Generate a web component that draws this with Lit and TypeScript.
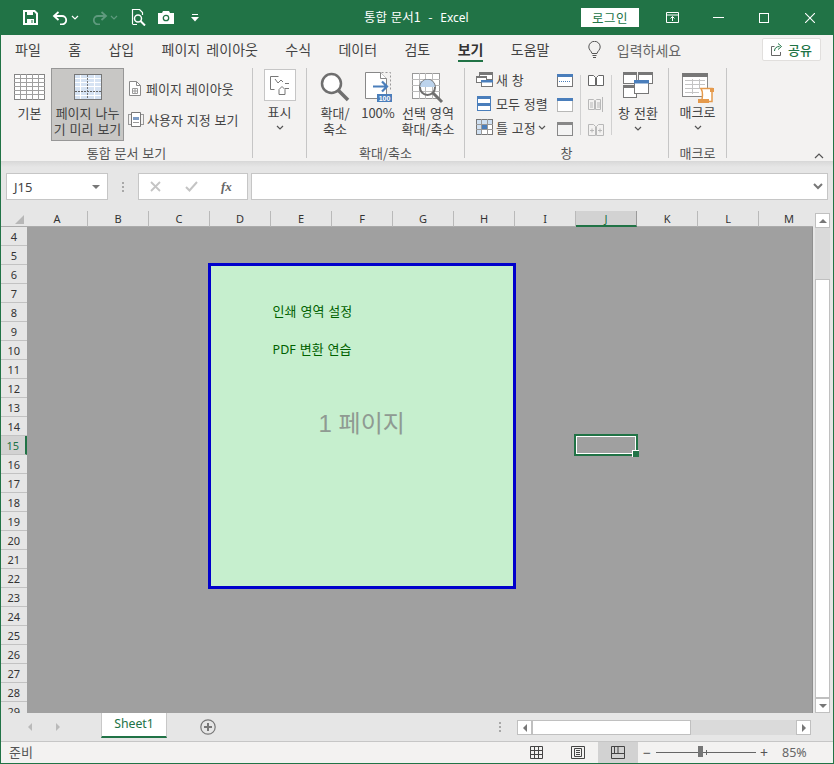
import { LitElement, html, css } from "lit";
import { customElement } from "lit/decorators.js";

const caret = (c = "#555") => html`<svg class="caret" width="8" height="5" viewBox="0 0 8 5"><path d="M1 1l3 3 3-3" fill="none" stroke=${c} stroke-width="1.2"/></svg>`;

const gridIcon = html`<svg width="31" height="26" viewBox="0 0 31 26"><rect x=".5" y=".5" width="30" height="25" fill="#fff" stroke="#858585"/><path d="M0 4.500h31M0 8.500h31M0 12.500h31M0 16.500h31M0 20.500h31M6.500 0v26M12.500 0v26M18.500 0v26M24.500 0v26" stroke="#a0a0a0"/></svg>`;
const breakIcon = html`<svg width="28" height="26" viewBox="0 0 28 26"><rect x=".5" y=".5" width="27" height="25" fill="#fff" stroke="#858585"/><path d="M1 1h26v24H1z" fill="#d6e3f3"/><path d="M0 4.500h28M0 8.500h28M0 12.500h28M0 21.500h28M6.500 0v26M20.500 0v26" stroke="#fff"/><path d="M13.500 1v24" stroke="#777" stroke-dasharray="2 1"/><path d="M1 17.500h26" stroke="#666" stroke-dasharray="2 1"/><rect x=".5" y=".5" width="27" height="25" fill="none" stroke="#777"/></svg>`;
const layoutIcon = html`<svg width="12" height="15" viewBox="0 0 12 15"><path d="M.5.500h7l4 4v10H.5z" fill="#fff" stroke="#8a8a8a"/><path d="M7.500.5v4h4" fill="none" stroke="#8a8a8a"/><path d="M3.500 7.500h5v5h-5zM6 7.500v5M3.500 10h5" fill="none" stroke="#9a9a9a"/></svg>`;
const customIcon = html`<svg width="16" height="17" viewBox="0 0 16 17"><path d="M3.500 1.500h9v14h-9z" fill="#fff" stroke="#777"/><path d="M0 3.500h3M0 13.500h3M13 3.500h3M13 13.500h3M.5 3v11M15.500 3v11" stroke="#999" fill="none"/><path d="M5 6h6v3H5z" fill="#7d9cc4"/><path d="M5 11.500h6" stroke="#999"/></svg>`;
const showIcon = html`<svg width="19" height="19" viewBox="0 0 19 19" fill="none" stroke="#777"><path d="M.5 13.500v-13h8M.5 13.500h4"/><path d="M5 3l3 4 3-3 2 2M15 7.500h4M15 12.500h4"/><path d="M9 18.500v-5l3-3 3 3v5z"/></svg>`;
const magIcon = html`<svg width="30" height="30" viewBox="0 0 30 30" fill="none"><circle cx="11.500" cy="11.500" r="9.500" fill="#fff" stroke="#6f6f6f" stroke-width="2.500"/><path d="M18.500 18.500l9.500 9.500" stroke="#6f6f6f" stroke-width="3.500"/></svg>`;
const hundredIcon = html`<svg width="27" height="30" viewBox="0 0 27 30"><path d="M.5.500h15l6 6v20H.5z" fill="#fff" stroke="#888"/><path d="M15.500.500v6h6" fill="#fff" stroke="#888"/><path d="M16.500.500h9v19" fill="none" stroke="#999" stroke-dasharray="2 2"/><path d="M8 14.500h14M17 9.500l5 5-5 5" fill="none" stroke="#4a7ebb" stroke-width="2.200"/><rect x="12" y="22" width="15" height="9" fill="#4a7ebb"/><text class="badge" x="19.500" y="29">100</text></svg>`;
const selZoomIcon = html`<svg width="32" height="31" viewBox="0 0 32 31"><rect x=".5" y=".5" width="27" height="25" fill="#fff" stroke="#999"/><path d="M0 6.500h28M0 12.500h28M0 18.500h28M7.500 0v26M13.500 0v26M20.500 0v26" stroke="#bbb"/><path d="M8 8h13v6H8z" fill="#bcd3ec"/><circle cx="15.500" cy="14.500" r="7.500" fill="none" stroke="#6f6f6f" stroke-width="2"/><path d="M8 14a7.500 7.500 0 0 1 15 0z" fill="#bcd3ec"/><path d="M21 20l9 9" stroke="#6f6f6f" stroke-width="3"/></svg>`;
const newWinIcon = html`<svg width="17" height="15" viewBox="0 0 17 15"><rect x="3.500" y=".5" width="13" height="7" fill="#fff" stroke="#777"/><path d="M3 0h14v3H3z" fill="#777"/><rect x=".5" y="4.500" width="10" height="6" fill="#fff" stroke="#777"/><path d="M0 4h11v2H0z" fill="#777"/><rect x="5.500" y="8.500" width="11" height="6" fill="#fff" stroke="#777"/><path d="M5 8h12v2.500H5z" fill="#4a7ebb"/></svg>`;
const arrangeIcon = html`<svg width="17" height="15" viewBox="-1 0 17 15"><rect x=".5" y=".5" width="13" height="14" fill="#fff" stroke="#4a7ebb"/><path d="M0 0h14v3H0zM0 7h14v3H0z" fill="#4a7ebb"/></svg>`;
const freezeIcon = html`<svg width="17" height="16" viewBox="0 0 17 16"><rect x=".5" y=".5" width="16" height="15" fill="#fff" stroke="#777"/><path d="M1 1h15v5H1zM1 1h5v14H1z" fill="#cfe0f2"/><path d="M0 5.500h17M0 10.500h17M5.500 0v16M11.500 0v16" stroke="#999"/><path d="M6 6h5v4H6z" fill="#4a7ebb"/></svg>`;
const winA = html`<svg width="16" height="13" viewBox="0 0 16 13"><rect x=".5" y=".5" width="15" height="12" fill="#fff" stroke="#777"/><path d="M0 0h16v3H0z" fill="#4a7ebb"/><path d="M2 7.500h12" stroke="#4a7ebb" stroke-dasharray="1 1"/></svg>`;
const winB = html`<svg width="16" height="14" viewBox="0 0 16 14"><rect x=".5" y=".5" width="15" height="13" fill="#fff" stroke="#777" stroke-dasharray="1 1"/><path d="M0 0h16v3H0z" fill="#4a7ebb"/></svg>`;
const winC = html`<svg width="16" height="14" viewBox="0 0 16 14"><rect x=".5" y=".5" width="15" height="13" fill="#f4f4f4" stroke="#888"/><path d="M0 0h16v3H0z" fill="#888"/></svg>`;
const bookA = html`<svg width="16" height="12" viewBox="0 0 16 12"><path d="M.5 1.500h5l2 2v8h-7zM8.500 3.500l2-2h5v10h-7z" fill="#fff" stroke="#666"/></svg>`;
const bookB = html`<svg width="16" height="15" viewBox="0 0 16 15" fill="none" stroke="#b8b8b8"><path d="M.5 2.500h5l1 1v9h-6zM7.500 3.500l1-1h4v10h-5z"/><path d="M2 6h3M2 8h3M2 10h3M9 6h3M9 8h3M9 10h3M14.500 0v15"/></svg>`;
const bookC = html`<svg width="16" height="13" viewBox="0 0 16 13" fill="none" stroke="#b8b8b8"><path d="M.5 1.500h5l2 2v9h-7zM8.500 3.500l2-2h5v11h-7z"/><path d="M2 7.500h4M4 5.500v4M10 7.500h4M12 5.500v4"/></svg>`;
const switchIcon = html`<svg width="30" height="26" viewBox="0 0 30 26"><rect x=".5" y=".5" width="13" height="11" fill="#fff" stroke="#777"/><path d="M0 0h14v3H0z" fill="#777"/><rect x="15.500" y=".5" width="14" height="11" fill="#fff" stroke="#777"/><path d="M15 0h15v3H15z" fill="#777"/><rect x=".5" y="13.500" width="13" height="12" fill="#fff" stroke="#777"/><path d="M0 13h14v3H0z" fill="#777"/><rect x="11.500" y="8.500" width="14" height="13" fill="#fff" stroke="#777"/><path d="M11 8h15v3.500H11z" fill="#4a7ebb"/></svg>`;
const macroIcon = html`<svg width="32" height="30" viewBox="0 0 32 30"><rect x=".5" y=".5" width="25" height="23" fill="#fff" stroke="#888"/><path d="M0 0h26v4H0z" fill="#777"/><path d="M3 7.500h20M3 11.500h20M3 15.500h20M3 19.500h14M10.500 6v15M17.500 6v10" stroke="#c4c4c4"/><path d="M19 15.500h11v13H19c2-3 2-10 0-13z" fill="#fff" stroke="#e59a4c" stroke-width="1.500"/><path d="M16 26h11v4H16z" fill="#e59a4c"/><path d="M28 15h4v4h-4z" fill="#e59a4c"/></svg>`;

const COLS = ["A","B","C","D","E","F","G","H","I","J","K","L","M"];
const ROWS = Array.from({ length: 26 }, (_, i) => i + 4);

@customElement("app-root")
export class AppRoot extends LitElement {
  static styles = css`
    :host { display: block; width: 834px; height: 764px; overflow: hidden; position: relative;
      font-family: "Noto Sans CJK KR", "Noto Sans", sans-serif; color: #444; background: #e6e6e6; }
    * { box-sizing: border-box; }
    svg { display: block; flex: none; }
    .win { display: flex; flex-direction: column; width: 834px; height: 764px; border: 1px solid #217346; border-top: 0; overflow: hidden; }
    .sp1 { height: 1px; } .sp3 { height: 3px; } .sp4 { height: 4px; } .sp5 { height: 5px; } .sp7 { height: 7px; }

    /* title bar */
    .title { flex: none; height: 35px; margin: 0 -1px; background: #217346; display: flex; align-items: center; color: #fff; }
    .qat { width: 360px; display: flex; align-items: center; padding-left: 23px; }
    .q-save { margin-right: 14px; }
    .q-undo-c { margin: 0 12px 0 2px; }
    .q-redo-c { margin: 0 13px 0 2px; }
    .q-cam { margin-left: 11px; }
    .q-more { margin-left: 17px; }
    .docname { width: 220px; font-size: 12.5px; line-height: 33px; height: 35px; white-space: pre; padding-left: 4px; word-spacing: 1px; }
    .docname .en { font-family: "Noto Sans", sans-serif; font-size: 12px; }
    .login { width: 58px; height: 19px; margin-left: 1px; background: #fff; color: #217346; font-size: 12.5px; line-height: 19px; text-align: center; letter-spacing: .5px; }
    .winbtns { display: flex; align-items: center; margin-left: 10px; }
    .winbtn { width: 46px; height: 35px; display: flex; align-items: center; justify-content: center; }

    /* tabs */
    .tabs { flex: none; height: 27px; background: #f3f2f1; display: flex; align-items: flex-start; padding: 3px 0 0 14px; gap: 27.400px; font-size: 14px; position: relative; }
    .tab { height: 24px; line-height: 22px; white-space: nowrap; color: #444; word-spacing: 3px; }
    .tab.on { font-weight: 700; color: #333; border-bottom: 2px solid #217346; }
    .tell { display: flex; align-items: center; gap: 16px; margin-left: 11px; height: 24px; color: #666; }
    .share { position: absolute; right: 12px; top: 3px; width: 59px; height: 23px; background: #fff; border: 1px solid #e1dfdd; border-radius: 2px; display: flex; align-items: center; justify-content: center; gap: 5px; color: #217346; font-size: 13px; font-weight: 500; }

    /* ribbon */
    .ribbon { flex: none; height: 100px; background: #f3f2f1; display: flex; padding-top: 6px; position: relative; font-size: 13px; border-bottom: 1px solid #d8d8d8; }
    .group { flex: none; display: flex; flex-direction: column; height: 93px; background: linear-gradient(#c6c6c6, #c6c6c6) right top / 1px 90px no-repeat; }
    .g1 { width: 252px; } .g2 { width: 54px; } .g3 { width: 158px; } .g4 { width: 204px; } .g5 { width: 58px; }
    .gbody { flex: 1; display: flex; min-height: 0; }
    .glabel { flex: none; height: 17px; line-height: 17px; text-align: center; color: #555; font-size: 13px; word-spacing: 1px; padding-right: 1px; }
    .big { display: flex; flex-direction: column; align-items: center; line-height: 16px; text-align: center; color: #444; word-spacing: 1px; white-space: nowrap; }
    .big .caret { margin-top: 5px; }
    .b-normal { width: 50px; padding: 6px 0 0 7px; }
    .b-break { width: 73px; height: 73px; padding-top: 5px; background: #c8c7c5; border: 1px solid #979797; }
    .smalls { display: flex; flex-direction: column; padding: 11px 0 0 5px; gap: 13px; }
    .small { display: flex; align-items: center; gap: 5px; height: 18px; white-space: nowrap; word-spacing: 1px; }
    .small.c { margin-left: -1px; gap: 3px; }
    .showbox { width: 32px; height: 32px; margin: 1px 0 3px; background: #fff; border: 1px solid #c6c6c6; display: flex; align-items: center; justify-content: center; }
    .b-show { width: 53px; padding: 0; }
    .b-zoom { width: 40px; padding-top: 4px; margin-left: 8px; }
    .b-hund { width: 46px; padding-top: 4px; }
    .b-sel { width: 54px; padding-top: 5px; }
    .wrows { display: flex; flex-direction: column; padding: 3px 0 0 11px; width: 92px; gap: 8px; }
    .wrow { display: flex; align-items: center; gap: 3px; height: 16px; white-space: nowrap; word-spacing: 1px; }
    .wrow .caret { margin-left: -1px; }
    .icol { display: flex; flex-direction: column; align-items: center; justify-content: space-between; width: 16px; height: 62px; margin-top: 6px; }
    .vsep { width: 1px; height: 60px; margin: 7px 7px 0; background: #d0d0d0; }
    .vsep.last { margin-right: 0; }
    .b-switch { width: 52px; padding-top: 4px; }
    .b-macro { width: 57px; padding-top: 5px; }
    .collapse { position: absolute; right: 9px; bottom: 2px; }

    /* formula bar */
    .fbar { flex: none; height: 49px; background: linear-gradient(#dadada, #e6e6e6 5px); display: flex; align-items: flex-start; padding: 11px 0 0 5px; }
    .box { background: #fff; border: 1px solid #c6c6c6; height: 27px; display: flex; align-items: center; }
    .namebox { width: 102px; padding: 0 7px; justify-content: space-between; font-size: 13px; color: #444; font-family: "Noto Sans", sans-serif; }
    .tri { width: 0; height: 0; border-left: 4px solid transparent; border-right: 4px solid transparent; border-top: 4px solid #777; }
    .fdots { width: 30px; display: flex; flex-direction: column; align-items: center; gap: 2px; padding-top: 9px; }
    .fdots i, .hdots i { display: block; width: 2px; height: 2px; background: #a8a8a8; }
    .fnbox { width: 110px; padding: 0 12px 0 11px; justify-content: space-between; }
    .fx { font-family: "Liberation Serif", serif; font-style: italic; font-weight: 700; font-size: 13px; color: #666; width: 14px; }
    .input { width: 577px; margin-left: 3px; justify-content: flex-end; padding-right: 4px; }

    /* sheet */
    .gridwrap { flex: none; height: 502px; display: flex; }
    .gridleft { flex: none; width: 811.600px; display: flex; flex-direction: column; }
    .colhead { flex: none; height: 16px; display: flex; background: #e6e6e6; }
    .corner { width: 25.600px; flex: none; position: relative; border-bottom: 1px solid #ababab; }
    .corner::after { content: ""; position: absolute; right: 3px; bottom: 2px; width: 0; height: 0; border-left: 9px solid transparent; border-bottom: 9px solid #b7b7b7; }
    .cols { flex: none; width: 786px; display: flex; overflow: hidden; }
    .col { flex: none; width: 61px; height: 16px; padding-left: 1px; text-align: center; font: 11px/15px "Noto Sans", sans-serif; color: #333; border-right: 1px solid #b9b9b9; border-bottom: 1px solid #ababab; }
    .col.sel { background: #d2d2d2; color: #217346; border-bottom: 2px solid #217346; border-right-color: #9a9a9a; }

    .main { flex: none; height: 486px; display: flex; }
    .rowhead { flex: none; width: 25.600px; overflow: hidden; background: #e6e6e6; }
    .row { height: 19.030px; text-align: center; font: 11px/19.500px "Noto Sans", sans-serif; color: #333; border-bottom: 1px solid #c2c2c2; }
    .row.sel { background: #d2d2d2; color: #217346; border-right: 2px solid #217346; }
    .sheet { flex: none; width: 786px; background: #a0a0a0; position: relative; overflow: hidden; border-right: 1px solid #8f8f8f; }
    .page { position: absolute; left: 181px; top: 36px; width: 308px; height: 326px; background: #c6efce; border: 3px solid #0000cc; }
    .pg-lines { padding: 35px 0 0 62px; display: flex; flex-direction: column; gap: 19px; color: #006100; font-size: 13px; word-spacing: 1px; }
    .pg-lines div { height: 19px; line-height: 19px; white-space: nowrap; }
    .pg-lines .en { font-family: "Noto Sans", sans-serif; font-size: 12.500px; }
    .pg-no { position: absolute; left: 108px; top: 141px; font: 24px/34px "Liberation Sans", "Noto Sans CJK KR", sans-serif; color: #8f9a92; white-space: nowrap; }
    .cell { position: absolute; left: 547.400px; top: 207px; width: 64px; height: 22px; border: 2px solid #217346; box-shadow: inset 0 0 0 1px #fff; }
    .cell::after { content: ""; position: absolute; right: -3px; bottom: -3px; width: 6px; height: 6px; background: #217346; border-left: 1px solid #fff; border-top: 1px solid #fff; }
    .vscroll { flex: none; width: 20px; display: flex; flex-direction: column; align-items: center; padding-top: 2px; background: #e6e6e6; }
    .track { width: 15px; height: 500px; background: #dadada; display: flex; flex-direction: column; }
    .sbtn { flex: none; width: 15px; height: 15px; background: #fff; border: 1px solid #c0c0c0; display: flex; align-items: center; justify-content: center; }
    .thumb { background: #fff; border: 1px solid #c0c0c0; }
    .t-up { border-left: 4px solid transparent; border-right: 4px solid transparent; border-bottom: 4px solid #777; }
    .t-dn { border-left: 4px solid transparent; border-right: 4px solid transparent; border-top: 4px solid #777; }
    .t-l { border-top: 4px solid transparent; border-bottom: 4px solid transparent; border-right: 4px solid #777; }
    .t-r { border-top: 4px solid transparent; border-bottom: 4px solid transparent; border-left: 4px solid #777; }
    .v-gap { flex: 1; }
    .v-thumb { flex: none; height: 419px; }

    /* sheet tabs */
    .tabbar { flex: none; height: 29px; background: #e6e6e6; display: flex; align-items: flex-start; border-bottom: 1px solid #c6c6c6; }
    .nav { flex: none; width: 100px; height: 28px; display: flex; align-items: center; gap: 24px; padding-left: 27px; }
    .nav i { opacity: .4; }
    .stab { flex: none; width: 66px; height: 25px; background: #fff; border: 1px solid #c8c8c8; border-top: 0; border-bottom: 2px solid #217346; color: #217346; font: 12.300px/22px "Noto Sans", sans-serif; text-align: center; }
    .add { flex: none; margin: 6px 0 0 33px; }
    .hdots { flex: none; width: 2px; margin: 9px 16px 0 283px; display: flex; flex-direction: column; gap: 2px; }
    .hscroll { flex: none; width: 294px; height: 15px; margin-top: 7px; display: flex; background: #dadada; }
    .h-thumb { flex: none; width: 159px; height: 15px; }

    /* status */
    .status { flex: 1; background: #f3f2f1; display: flex; align-items: stretch; font-size: 13px; color: #555; }
    .ready { width: 515px; padding-left: 8px; line-height: 19px; }
    .vw { flex: none; width: 41px; display: flex; align-items: center; justify-content: center; }
    .vw.on { background: #d2d2d2; width: 40px; }
    .zoom { display: flex; align-items: center; padding-left: 4px; }
    .slider { width: 100px; height: 1px; background: #666; margin: 0 3px 0 4px; position: relative; }
    .knob { position: absolute; left: 42px; top: -6px; width: 5px; height: 11px; background: #767676; }
    .tick { position: absolute; left: 50px; top: -2px; width: 1px; height: 5px; background: #666; }
    .pm { font: 14px/16px "Noto Sans", sans-serif; color: #555; width: 10px; text-align: center; }
    .pct { margin-left: 13px; font: 12.500px/20px "Noto Sans", sans-serif; color: #666; }
    .badge { font: 700 7px "Liberation Sans", sans-serif; fill: #fff; text-anchor: middle; }
  `;

  render() {
    return html`<div class="win">
      <div class="title">
        <div class="qat">
          <svg class="q-save" width="15" height="15" viewBox="0 0 15 15"><path d="M1 1h10.500L14 3.500V14H1z" fill="none" stroke="#fff" stroke-width="2"/><path d="M4 1.500h6v3.500H4z" fill="#fff"/><path d="M4 9h7v5H4z" fill="#fff"/><path d="M8.500 10h1v3h-1z" fill="#217346"/></svg>
          <svg width="17" height="14" viewBox="0 0 17 14" fill="none" stroke="#fff" stroke-width="1.800"><path d="M6.500 1L2 5l4.500 4"/><path d="M2.500 5H10a4.200 4.200 0 0 1 0 8.400H8"/></svg>
          <svg class="q-undo-c" width="8" height="5" viewBox="0 0 8 5"><path d="M1 1l3 3 3-3" fill="none" stroke="#fff" stroke-width="1.200"/></svg>
          <svg width="17" height="14" viewBox="0 0 17 14" fill="none" stroke="#5f9a7e" stroke-width="1.800"><path d="M10.500 1L15 5l-4.500 4"/><path d="M14.500 5H7a4.200 4.200 0 0 0 0 8.400h2"/></svg>
          <svg class="q-redo-c" width="8" height="5" viewBox="0 0 8 5"><path d="M1 1l3 3 3-3" fill="none" stroke="#5f9a7e" stroke-width="1.200"/></svg>
          <svg width="16" height="17" viewBox="0 0 16 17" fill="none" stroke="#fff"><path d="M1.500 15V.5h7l3 3V6" stroke-width="1.200"/><circle cx="7" cy="9.500" r="3.500" stroke-width="1.500"/><path d="M9.500 12l4.500 4.500" stroke-width="2"/><path d="M1.500 15.500H6" stroke-width="1"/></svg>
          <svg class="q-cam" width="16" height="13" viewBox="0 0 16 13"><path d="M0 2h4l1-2h6l1 2h4v11H0z" fill="#fff"/><circle cx="8" cy="7" r="2.700" fill="none" stroke="#217346" stroke-width="1.300"/></svg>
          <svg class="q-more" width="8" height="8" viewBox="0 0 8 8"><path d="M1 .5h6" stroke="#fff"/><path d="M0 3h8L4 7.500z" fill="#fff"/></svg>
        </div>
        <div class="docname">통합 문서1  -  <span class="en">Excel</span></div>
        <div class="login">로그인</div>
        <div class="winbtns">
          <div class="winbtn"><svg width="13" height="11" viewBox="0 0 13 11" fill="none" stroke="#fff"><path d="M.5.500h12v10H.5zM.5 3h12"/><path d="M6.500 9V4.500M4.500 6.500l2-2 2 2"/></svg></div>
          <div class="winbtn"><svg width="11" height="1" viewBox="0 0 11 1"><path d="M0 .5h11" stroke="#fff"/></svg></div>
          <div class="winbtn"><svg width="10" height="10" viewBox="0 0 10 10"><rect x=".5" y=".5" width="9" height="9" fill="none" stroke="#fff"/></svg></div>
          <div class="winbtn"><svg width="10" height="10" viewBox="0 0 10 10"><path d="M0 0l10 10M10 0L0 10" stroke="#fff" stroke-width="1.100"/></svg></div>
        </div>
      </div>

      <div class="tabs">
        ${["파일","홈","삽입","페이지 레이아웃","수식","데이터","검토"].map((t) => html`<div class="tab">${t}</div>`)}
        <div class="tab on">보기</div>
        <div class="tab">도움말</div>
        <div class="tell">
          <svg width="13" height="18" viewBox="0 0 13 18" fill="none" stroke="#555"><path d="M4 12.500C3.500 10 .8 9 .8 6a5.700 5.700 0 0 1 11.400 0c0 3-2.700 4-3.200 6.500z"/><path d="M4.500 14.500h4M5 16.500h3"/></svg>
          <span>입력하세요</span>
        </div>
        <div class="share">
          <svg width="12" height="13" viewBox="0 0 12 13" fill="none" stroke="#666"><path d="M3.500 3.500H.5v9h9V9"/><path d="M3.500 8c0-3 2-4.500 5-4.500M7 .5l3.500 3L7 6.500" stroke="#217346"/></svg>
          <span>공유</span>
        </div>
      </div>

      <div class="ribbon">
        <div class="group g1">
          <div class="gbody">
            <div class="big b-normal"><span>${gridIcon}</span><div class="sp5"></div><span>기본</span></div>
            <div class="big b-break"><span>${breakIcon}</span><div class="sp5"></div><span>페이지 나누</span><span>기 미리 보기</span></div>
            <div class="smalls">
              <div class="small">${layoutIcon}<span>페이지 레이아웃</span></div>
              <div class="small c">${customIcon}<span>사용자 지정 보기</span></div>
            </div>
          </div>
          <div class="glabel">통합 문서 보기</div>
        </div>
        <div class="group g2">
          <div class="gbody">
            <div class="big b-show"><div class="showbox">${showIcon}</div><span>표시</span>${caret()}</div>
          </div>
        </div>
        <div class="group g3">
          <div class="gbody">
            <div class="big b-zoom"><span>${magIcon}</span><div class="sp3"></div><span>확대/</span><span>축소</span></div>
            <div class="big b-hund"><span>${hundredIcon}</span><div class="sp3"></div><span>100%</span></div>
            <div class="big b-sel"><span>${selZoomIcon}</span><div class="sp1"></div><span>선택 영역</span><span>확대/축소</span></div>
          </div>
          <div class="glabel">확대/축소</div>
        </div>
        <div class="group g4">
          <div class="gbody">
            <div class="wrows">
              <div class="wrow">${newWinIcon}<span>새 창</span></div>
              <div class="wrow">${arrangeIcon}<span>모두 정렬</span></div>
              <div class="wrow">${freezeIcon}<span>틀 고정</span>${caret()}</div>
            </div>
            <div class="icol">${winA}${winB}${winC}</div>
            <div class="vsep"></div>
            <div class="icol">${bookA}${bookB}${bookC}</div>
            <div class="vsep last"></div>
            <div class="big b-switch"><span>${switchIcon}</span><div class="sp7"></div><span>창 전환</span>${caret()}</div>
          </div>
          <div class="glabel">창</div>
        </div>
        <div class="group g5">
          <div class="gbody">
            <div class="big b-macro"><span>${macroIcon}</span><div class="sp1"></div><span>매크로</span>${caret()}</div>
          </div>
          <div class="glabel">매크로</div>
        </div>
        <svg class="collapse" width="10" height="6" viewBox="0 0 10 6"><path d="M1 5l4-4 4 4" fill="none" stroke="#555" stroke-width="1.200"/></svg>
      </div>

      <div class="fbar">
        <div class="box namebox"><span>J15</span><span class="tri"></span></div>
        <div class="fdots"><i></i><i></i><i></i></div>
        <div class="box fnbox">
          <svg width="11" height="11" viewBox="0 0 11 11"><path d="M1 1l9 9M10 1l-9 9" stroke="#c4c4c4" stroke-width="1.800"/></svg>
          <svg width="13" height="11" viewBox="0 0 13 11"><path d="M1 6l3.500 3.500L12 1" fill="none" stroke="#c4c4c4" stroke-width="2"/></svg>
          <span class="fx">fx</span>
        </div>
        <div class="box input"><svg width="10" height="7" viewBox="0 0 10 7"><path d="M1 1l4 4 4-4" fill="none" stroke="#777" stroke-width="2"/></svg></div>
      </div>

      <div class="gridwrap">
        <div class="gridleft">
          <div class="colhead">
            <div class="corner"></div>
            <div class="cols">${COLS.map((c) => html`<div class="col ${c === "J" ? "sel" : ""}">${c}</div>`)}</div>
          </div>
          <div class="main">
            <div class="rowhead">${ROWS.map((r) => html`<div class="row ${r === 15 ? "sel" : ""}">${r}</div>`)}</div>
            <div class="sheet">
              <div class="page">
                <div class="pg-lines"><div>인쇄 영역 설정</div><div><span class="en">PDF</span> 변환 연습</div></div>
                <div class="pg-no">1 페이지</div>
              </div>
              <div class="cell"></div>
            </div>
          </div>
        </div>
        <div class="vscroll">
          <div class="track">
            <div class="sbtn"><i class="t-up"></i></div>
            <div class="v-gap"></div>
            <div class="thumb v-thumb"></div>
            <div class="sbtn"><i class="t-dn"></i></div>
          </div>
        </div>
      </div>

      <div class="tabbar">
        <div class="nav"><i class="t-l"></i><i class="t-r"></i></div>
        <div class="stab">Sheet1</div>
        <svg class="add" width="16" height="16" viewBox="0 0 16 16" fill="none"><circle cx="8" cy="8" r="7.200" stroke="#777" stroke-width="1.200"/><path d="M4 8h8M8 4v8" stroke="#777" stroke-width="2"/></svg>
        <div class="hdots"><i></i><i></i><i></i></div>
        <div class="hscroll">
          <div class="sbtn"><i class="t-l"></i></div>
          <div class="thumb h-thumb"></div>
          <div class="v-gap"></div>
          <div class="sbtn"><i class="t-r"></i></div>
        </div>
      </div>

      <div class="status">
        <div class="ready">준비</div>
        <div class="vw"><svg width="13" height="13" viewBox="0 0 13 13" fill="none" stroke="#444"><path d="M.5.500h12v12H.5zM.5 4.500h12M.5 8.500h12M4.500.5v12M8.500.5v12"/></svg></div>
        <div class="vw"><svg width="14" height="13" viewBox="0 0 14 13" fill="none" stroke="#444"><path d="M.5.500h13v12H.5z"/><path d="M3.500 2.500h7v8h-7zM5 4.500h4M5 6.500h4M5 8.500h4"/></svg></div>
        <div class="vw on"><svg width="14" height="13" viewBox="0 0 14 13" fill="none" stroke="#444"><path d="M.5.500h13v12H.5zM.5 7.500h13M7 .5v7M3.500.5v7"/></svg></div>
        <div class="zoom">
          <span class="pm">−</span>
          <div class="slider"><i class="knob"></i><i class="tick"></i></div>
          <span class="pm">+</span>
          <span class="pct">85%</span>
        </div>
      </div>
    </div>`;
  }
}
